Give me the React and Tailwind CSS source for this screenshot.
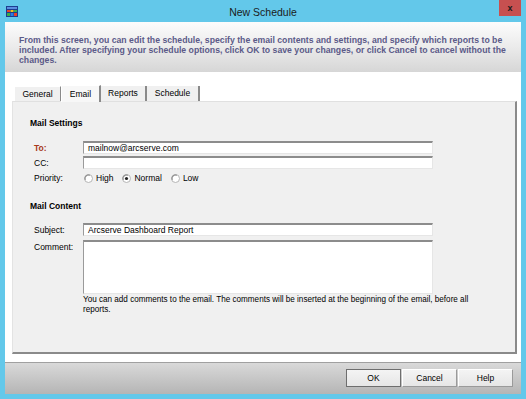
import React from "react";

function Radio({ checked }) {
  return (
    <svg width="9" height="9" viewBox="0 0 9 9" className="shrink-0">
      <circle cx="4.5" cy="4.5" r="4" fill="#ffffff" stroke="#b5b5b5" strokeWidth="1" />
      <path d="M1.2 5.8 A3.6 3.6 0 0 1 5.8 1.2" fill="none" stroke="#7a7a7a" strokeWidth="1" />
      {checked && <circle cx="4.5" cy="4.5" r="1.6" fill="#222" />}
    </svg>
  );
}

function AppIcon() {
  return (
    <svg width="12" height="11" viewBox="0 0 12 11">
      <rect x="0" y="0" width="12" height="11" fill="#1d3d8f" />
      <rect x="1" y="1" width="10" height="2" fill="#5b8fe0" />
      <rect x="1" y="4" width="3" height="2" fill="#e8402a" />
      <rect x="4.5" y="4" width="3" height="2" fill="#f2c31c" />
      <rect x="8" y="4" width="3" height="2" fill="#38b04a" />
      <rect x="1" y="7" width="3" height="3" fill="#38b04a" />
      <rect x="4.5" y="7" width="3" height="3" fill="#2f7de0" />
      <rect x="8" y="7" width="3" height="3" fill="#e8402a" />
    </svg>
  );
}

const inputCls =
  "h-[13px] w-[350px] bg-white border-t-2 border-l border-r border-b border-t-[#8c8c8c] border-l-[#9a9a9a] border-r-[#e6e6e6] border-b-[#e6e6e6] pl-[4px] text-[8.5px] leading-[10px] text-black flex items-center";

export default function App() {
  return (
    <div className="w-[526px] h-[399px] bg-[#63c8ea] flex flex-col font-['Liberation_Sans',Arial,sans-serif] text-black overflow-hidden">
      {/* title bar */}
      <div className="h-[22px] grid grid-cols-[1fr_auto_1fr] shrink-0">
        <div className="pl-[6px] pt-[6px]">
          <AppIcon />
        </div>
        <div className="text-[10.5px] leading-[22px] text-[#1b1b1b] pt-[1px]">New Schedule</div>
        <div className="flex justify-end items-start pr-[5px]">
          <div className="w-[22px] h-[16px] bg-[#c75050] flex items-center justify-center text-[#1a1a1a] text-[9px] font-bold leading-none">
            x
          </div>
        </div>
      </div>

      {/* window body */}
      <div className="mx-[5px] mb-[5px] flex-1 bg-white flex flex-col">
        {/* description header */}
        <div className="h-[50px] bg-gradient-to-b from-[#fcfcfc] via-[#ebebeb] to-[#d6d6d6] pl-[14px] pr-[4px] pt-[13px] shrink-0">
          <p className="text-[8.7px] leading-[10px] font-bold text-[#5b5a88] whitespace-nowrap">
            From this screen, you can edit the schedule, specify the email contents and settings, and specify which reports to be
            <br />
            included. After specifying your schedule options, click OK to save your changes, or click Cancel to cancel without the
            <br />
            changes.
          </p>
        </div>

        {/* main */}
        <div className="flex-1 flex flex-col pl-[7px] pr-[4px] pt-[12px] pb-[8px]">
          {/* tabs */}
          <div className="flex items-end pl-[2px] h-[17px] relative z-10 text-[8.5px] leading-none">
            <div className="w-[47px] h-[15px] bg-[#f0f0f0] border-t border-l border-t-[#ffffff] border-l-[#ffffff] border-r border-r-[#8a8a8a] flex items-center justify-center">
              General
            </div>
            <div className="w-[40px] h-[17px] bg-[#f7f7f7] border-t border-l border-t-[#ffffff] border-l-[#ffffff] border-r-2 border-r-[#8a8a8a] flex items-center justify-center -mb-[1px]">
              Email
            </div>
            <div className="w-[46px] h-[15px] bg-[#f0f0f0] border-r-2 border-r-[#8a8a8a] flex items-center justify-center">
              Reports
            </div>
            <div className="w-[53px] h-[15px] bg-[#f0f0f0] border-r-2 border-r-[#8a8a8a] flex items-center justify-center">
              Schedule
            </div>
          </div>

          {/* panel */}
          <div className="flex-1 bg-[#f0f0f0] border-t border-l border-t-[#e0e0e0] border-l-[#e3e3e3] border-r-2 border-b-2 border-r-[#8a8a8a] border-b-[#8a8a8a] flex flex-col text-[8.5px] leading-[10px]">
            <div className="pl-[17px] mt-[16px] font-bold">Mail Settings</div>

            <div className="flex items-center mt-[13px] pl-[21px]">
              <div className="w-[49px] text-[#a8391b] font-bold">To:</div>
              <div className={inputCls}>mailnow@arcserve.com</div>
            </div>
            <div className="flex items-center mt-[2px] pl-[21px]">
              <div className="w-[49px]">CC:</div>
              <div className={inputCls}></div>
            </div>
            <div className="flex items-center mt-[3px] pl-[21px] h-[12px]">
              <div className="w-[49px]">Priority:</div>
              <div className="flex items-center gap-[3px] pl-[1px]">
                <Radio />
                <span className="mr-[6px]">High</span>
                <Radio checked />
                <span className="mr-[6px]">Normal</span>
                <Radio />
                <span>Low</span>
              </div>
            </div>

            <div className="pl-[17px] mt-[17px] font-bold">Mail Content</div>

            <div className="flex items-center mt-[12px] pl-[21px]">
              <div className="w-[49px]">Subject:</div>
              <div className={inputCls}>Arcserve Dashboard Report</div>
            </div>
            <div className="flex items-start mt-[4px] pl-[21px]">
              <div className="w-[49px] pt-[2px]">Comment:</div>
              <div className="h-[54px] w-[350px] bg-white border-t-2 border-l border-r border-b border-t-[#8c8c8c] border-l-[#9a9a9a] border-r-[#e6e6e6] border-b-[#e6e6e6]"></div>
            </div>
            <div className="pl-[70px] mt-[1px] text-[8.15px] leading-[10px]">
              You can add comments to the email. The comments will be inserted at the beginning of the email, before all
              <br />
              reports.
            </div>
          </div>
        </div>

        {/* footer */}
        <div className="h-[32px] shrink-0 border-t border-t-[#a0a0a0] bg-gradient-to-b from-[#d9d9d9] to-[#b5b5b5] flex justify-end items-start pt-[6px] pr-[8px] text-[8.5px]">
          <div className="w-[55px] h-[18px] bg-gradient-to-b from-[#f4f4f4] to-[#e6e6e6] border border-[#6e6e6e] flex items-center justify-center">
            OK
          </div>
          <div className="w-[55px] h-[18px] bg-gradient-to-b from-[#f4f4f4] to-[#e6e6e6] border border-t-white border-l-white border-r-[#9a9a9a] border-b-[#9a9a9a] flex items-center justify-center ml-[1px]">
            Cancel
          </div>
          <div className="w-[55px] h-[18px] bg-gradient-to-b from-[#f4f4f4] to-[#e6e6e6] border border-t-white border-l-white border-r-[#9a9a9a] border-b-[#9a9a9a] flex items-center justify-center ml-[1px]">
            Help
          </div>
        </div>
      </div>
    </div>
  );
}
